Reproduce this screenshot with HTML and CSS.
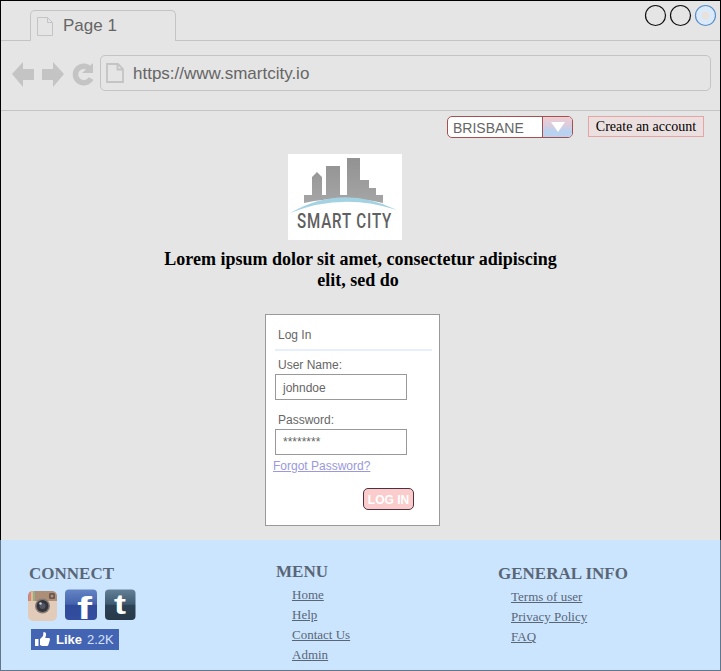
FILE: index.html
```html
<!DOCTYPE html>
<html lang="en">
<head>
<meta charset="utf-8">
<title>Page 1</title>
<link rel="stylesheet" href="styles.css">
</head>
<body>
<div class="window">
  <header class="tabs">
    <div class="tab">
      <svg class="tab-icon" width="16" height="19" viewBox="0 0 16 19"><path d="M.5.5h10l5 5v13H.5zM10.500.5v5h5" fill="none" stroke="#c4c4c4"/></svg>
      <span>Page 1</span>
    </div>
    <div class="strip"></div>
    <svg class="controls" width="72" height="23" viewBox="0 0 72 23"><g fill="none" stroke-width="1.2"><circle cx="11.500" cy="11.500" r="10" stroke="#111"/><circle cx="36.500" cy="11.500" r="10" stroke="#111"/><circle cx="61.500" cy="11.500" r="10" fill="#dbeafa" stroke="#5a8fc8"/></g><circle cx="61.500" cy="11.500" r="4" fill="#e8e2dd"/></svg>
  </header>
  <nav class="toolbar">
    <svg class="nav-icons" width="84" height="26" viewBox="0 0 84 26"><path d="M1 13 12 1v7h11v11H12v7zM53 13 42 1v7H31v11h11v7z" fill="#c4c4c4"/><path d="M79 8a8.300 8.300 0 1 0 1 9.500" fill="none" stroke="#c4c4c4" stroke-width="5.500"/><path d="M82 2v10H71z" fill="#c4c4c4"/></svg>
    <div class="address">
      <svg width="18" height="20" viewBox="0 0 18 20"><path d="M1 1h11l5 5v13H1zM11.500 1v5.500H17" fill="none" stroke="#c4c4c4" stroke-width="1.800"/></svg>
      <span>https://www.smartcity.io</span>
    </div>
  </nav>
  <main class="page">
    <div class="actions">
      <div class="select"><span class="city">BRISBANE</span><span class="arrow"><svg width="16" height="10" viewBox="0 0 16 10"><path d="M1 0h14L8 10z" fill="#fff"/></svg></span></div>
      <a class="create">Create an account</a>
    </div>
    <svg class="logo" width="114" height="86" viewBox="0 0 114 86">
      <defs><linearGradient id="metal" x1="0" y1="0" x2="0" y2="1"><stop offset="0" stop-color="#929292"/><stop offset="1" stop-color="#a5a5a5"/></linearGradient></defs>
      <rect width="114" height="86" fill="#fff"/>
      <path d="M16 49v-8h8V23l5-5 5 5v18h4V12h14v29h7V4h13v22h9v8h7v7h7v8q-38-9-79 0z" fill="url(#metal)"/>
      <path d="M2 59Q54 29 109 56 54 38 2 59z" fill="#a3d2e3"/>
      <g transform="translate(9 74) scale(.72 1)"><text class="logo-text" textLength="131" lengthAdjust="spacing">SMART CITY</text></g>
    </svg>
    <h1>Lorem ipsum dolor sit amet, consectetur adipiscing<span class="line">elit, sed do</span></h1>
    <section class="login">
      <h2>Log In</h2>
      <div class="label">User Name:</div>
      <div class="field">johndoe</div>
      <div class="label second">Password:</div>
      <div class="field stars">********</div>
      <a class="forgot">Forgot Password?</a>
      <div class="button">LOG IN</div>
    </section>
  </main>
  <footer>
    <section class="connect">
      <h3>CONNECT</h3>
      <svg class="social" width="108" height="32" viewBox="0 0 108 32">
        <defs>
          <linearGradient id="fb" x1="0" y1="0" x2="0" y2="1"><stop offset="0" stop-color="#6484c4"/><stop offset=".48" stop-color="#4563ad"/><stop offset=".52" stop-color="#304b99"/><stop offset="1" stop-color="#334da0"/></linearGradient>
          <linearGradient id="tb" x1="0" y1="0" x2="0" y2="1"><stop offset="0" stop-color="#638098"/><stop offset=".48" stop-color="#3e5a70"/><stop offset=".52" stop-color="#2b4154"/><stop offset="1" stop-color="#28394a"/></linearGradient>
          <clipPath id="cam"><rect y="2" width="29" height="30" rx="5"/></clipPath>
        </defs>
        <g clip-path="url(#cam)"><path d="M0 2h29v30H0z" fill="#e2cbb9"/><path d="M0 2h29v10H0z" fill="#ad8e77"/><path d="M1 2h2v10H1z" fill="#de8189"/><path d="M3 2h2v10H3z" fill="#d9c086"/><path d="M5 2h2v10H5z" fill="#98ac8c"/></g>
        <rect x="21" y="4" width="6" height="6" rx="1.500" fill="#6c554b"/><circle cx="24" cy="7" r="1.500" fill="#a49488"/>
        <circle cx="14.500" cy="17" r="7.500" fill="#837a76"/><circle cx="14.500" cy="17" r="6" fill="#34343b"/><circle cx="14.500" cy="17" r="3" fill="#535663"/><circle cx="12.500" cy="14.500" r="1.300" fill="#cdd0d8"/>
        <rect x="37" y="0.500" width="32" height="30.500" rx="4" fill="url(#fb)"/><text class="glyph facebook" x="49" y="30" textLength="15" lengthAdjust="spacingAndGlyphs">f</text>
        <rect x="77" y="0.500" width="30.500" height="30.500" rx="4" fill="url(#tb)"/><text class="glyph tumblr" x="86" y="24.500" textLength="12" lengthAdjust="spacingAndGlyphs">t</text>
      </svg>
      <div class="like"><svg width="15" height="15" viewBox="0 0 15 15"><path d="M0 7h3.500v7H0zM5 7l3-3 .5-4q3 0 2.500 3l-.7 3H14q1 0 1 1.500l-1.500 5Q13 14 12 14H7l-2-1z" fill="#fff"/></svg><b>Like</b><span>2.2K</span></div>
    </section>
    <section class="menu">
      <h3>MENU</h3>
      <ul><li>Home</li><li>Help</li><li>Contact Us</li><li>Admin</li></ul>
    </section>
    <section class="info">
      <h3>GENERAL INFO</h3>
      <ul><li>Terms of user</li><li>Privacy Policy</li><li>FAQ</li></ul>
    </section>
  </footer>
</div>
</body>
</html>
```
FILE: styles.css
```css
* { box-sizing: border-box; }
body { margin: 0; font-family: "Liberation Sans", Arial, sans-serif; color: #666; }
h1, h2, h3, ul { margin: 0; padding: 0; }
.window { width: 721px; height: 671px; background: #e5e5e5; display: flex; flex-direction: column; }
.tabs { height: 41px; border: 1px solid #000; border-bottom: 0; display: flex; position: relative; align-items: flex-end; }
.tabs::before { content: ""; width: 29px; border-bottom: 1px solid #c4c4c4; }
.tab { width: 146px; height: 31px; border: 1px solid #c4c4c4; border-bottom: 0; border-radius: 5px 5px 0 0; display: flex; align-items: center; padding-left: 6px; gap: 10px; font-size: 17px; }
.tab-icon { margin-top: 1px; }
.strip { flex: 1; border-bottom: 1px solid #c4c4c4; }
.controls { position: absolute; right: 4px; top: 3px; }
.toolbar { height: 70px; border: solid #000; border-width: 0 1px; display: flex; align-items: flex-start; padding: 14px 9px 0 10px; box-shadow: inset 0 -1px #c4c4c4; }
.nav-icons { margin-top: 6px; }
.address { flex: 1; height: 36px; margin-left: 5px; border: 1px solid #c4c4c4; border-radius: 5px; display: flex; align-items: center; padding-left: 5px; gap: 9px; font-size: 17px; }
.address span { padding-top: 2px; }
.page { height: 429px; border: solid #000; border-width: 0 1px; display: flex; flex-direction: column; }
.actions { height: 43px; display: flex; justify-content: flex-end; align-items: flex-start; padding: 5px 16px 0 0; gap: 15px; }
.select { width: 126px; height: 22px; border: 1px solid #a35050; border-radius: 5px; overflow: hidden; display: flex; background: #fff; }
.city { flex: 1; font-size: 14px; line-height: 23px; padding-left: 5px; }
.arrow { width: 30px; border-left: 1px solid #a35050; display: flex; align-items: center; justify-content: center; background: linear-gradient(#f0cdd0, #d8cce0 45%, #b8d2f0 70%, #b8d2f0); }
.create { width: 116px; height: 21px; border: 1px solid #e6a5a5; background: #ebdfdf; color: #000; font: 14px/20px "Liberation Serif", serif; text-align: center; white-space: nowrap; }
.logo { margin-left: 287px; flex: none; }
.logo-text { font: 500 21px Roboto, sans-serif; fill: #606060; }
h1 { margin-top: 9px; font: bold 18px/21px "Liberation Serif", serif; color: #000; text-align: center; }
.line { display: block; padding-right: 5px; }
.login { width: 175px; height: 212px; margin: 23px 0 0 264px; border: 1px solid #999; background: #fff; padding: 10px 7px 0 9px; font-size: 12px; display: flex; flex-direction: column; }
.login h2 { font-size: 12px; font-weight: normal; line-height: 20px; height: 26px; padding-left: 3px; border-bottom: 2px solid #e5f0fc; }
.label { line-height: 14px; margin-top: 7px; padding-left: 3px; }
.second { margin-top: 13px; }
.field { width: 132px; height: 26px; margin-top: 2px; border: 1px solid #999; padding-left: 7px; line-height: 26px; }
.stars { line-height: 25px; }
.forgot { color: #9999dc; text-decoration: underline; margin: 4px 0 0 -2px; line-height: 14px; }
.button { width: 51px; height: 22px; margin: 15px 0 0 88px; border: 1px solid #503040; border-radius: 5px; background: #fbcccc; color: #fff; font-weight: bold; line-height: 23px; text-align: center; white-space: nowrap; }
footer { height: 131px; background: #cce5ff; border: 1px solid #61758b; border-top: 0; display: grid; grid-template-columns: 247px 222px 1fr; padding-left: 28px; font-family: "Liberation Serif", serif; color: #596676; }
h3 { font-size: 17px; line-height: 20px; }
.connect { padding-top: 24px; }
.social { display: block; margin: 5px 0 0 -1px; overflow: visible; }
.glyph { fill: #fff; font-family: "Liberation Sans", sans-serif; font-weight: bold; }
.facebook { font-size: 32px; }
.tumblr { font-size: 28px; }
.like { width: 88px; height: 21px; margin: 8px 0 0 2px; background: #4264b3; color: #fff; display: flex; align-items: center; padding-left: 4px; font: 13px "Liberation Sans", sans-serif; }
.like b { margin: 0 5px 0 6px; }
.like span { color: #d5e2fa; }
.menu { padding-top: 22px; }
.info { padding-top: 24px; }
ul { list-style: none; margin: 3px 0 0 16px; font-size: 13px; line-height: 20px; text-decoration: underline; }
.info ul { margin-left: 13px; }
```
